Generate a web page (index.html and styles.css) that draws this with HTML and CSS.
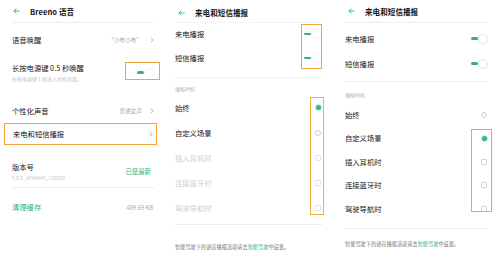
FILE: index.html
```html
<!DOCTYPE html>
<html lang="zh-CN">
<head>
<meta charset="utf-8">
<link rel="stylesheet" href="styles.css">
</head>
<body>
<div class="screens">

  <section class="screen s1">
    <header class="bar">
      <svg class="back" viewBox="0 0 10 8"><path d="M9 4H1.5M4.5 1L1.3 4l3.2 3" /></svg>
      <span class="title">Breeno 语音</span>
    </header>
    <div class="rule"></div>
    <div class="row r-wake">
      <span class="label">语音唤醒</span>
      <span class="value">“小布小布”<i class="chev"></i></span>
    </div>
    <div class="row r-power">
      <div class="text">
        <div class="label">长按电源键 0.5 秒唤醒</div>
        <div class="sub">长按电源键 1 秒进入关机页面。</div>
      </div>
      <span class="switch"><span class="track"></span><span class="knob"></span></span>
    </div>
    <div class="row r-voice">
      <span class="label">个性化声音</span>
      <span class="value">普通女声<i class="chev"></i></span>
    </div>
    <div class="row r-call boxed">
      <span class="label">来电和短信播报</span>
      <span class="value"><i class="chev"></i></span>
    </div>
    <div class="row r-version">
      <div class="text">
        <div class="label">版本号</div>
        <div class="sub">5.0.6_d744445_190929</div>
      </div>
      <span class="value green">已是最新</span>
    </div>
    <div class="rule"></div>
    <div class="row r-cache">
      <span class="label green">清理缓存</span>
      <span class="value">489.69 KB</span>
    </div>
    <div class="mark m1"></div>
  </section>

  <section class="screen s2">
    <header class="bar">
      <svg class="back" viewBox="0 0 10 8"><path d="M9 4H1.5M4.5 1L1.3 4l3.2 3" /></svg>
      <span class="title">来电和短信播报</span>
    </header>
    <div class="rule faint"></div>
    <div class="row tog"><span class="label">来电播报</span><span class="switch"><span class="track"></span><span class="knob"></span></span></div>
    <div class="row tog"><span class="label">短信播报</span><span class="switch"><span class="track"></span><span class="knob"></span></span></div>
    <div class="rule sec-rule"></div>
    <div class="caption">播报时机</div>
    <div class="row opt"><span class="label">始终</span><span class="radio on"></span></div>
    <div class="row opt"><span class="label">自定义场景</span><span class="radio"></span></div>
    <div class="row opt off"><span class="label">插入耳机时</span><span class="check"></span></div>
    <div class="row opt off"><span class="label">连接蓝牙时</span><span class="check"></span></div>
    <div class="row opt off"><span class="label">驾驶导航时</span><span class="check"></span></div>
    <div class="rule foot-rule"></div>
    <p class="foot">智能驾驶下的语音播报选项请去<span class="green">智能驾驶</span>中设置。</p>
    <div class="mark m2a"></div>
    <div class="mark m2b"></div>
  </section>

  <section class="screen s3">
    <header class="bar">
      <svg class="back" viewBox="0 0 10 8"><path d="M9 4H1.5M4.5 1L1.3 4l3.2 3" /></svg>
      <span class="title">来电和短信播报</span>
    </header>
    <div class="rule"></div>
    <div class="row tog"><span class="label">来电播报</span><span class="switch"><span class="track"></span><span class="knob"></span></span></div>
    <div class="row tog"><span class="label">短信播报</span><span class="switch"><span class="track"></span><span class="knob"></span></span></div>
    <div class="rule sec-rule"></div>
    <div class="caption">播报时机</div>
    <div class="row opt"><span class="label">始终</span><span class="radio"></span></div>
    <div class="row opt"><span class="label">自定义场景</span><span class="radio on"></span></div>
    <div class="row opt"><span class="label">插入耳机时</span><span class="check"></span></div>
    <div class="row opt"><span class="label">连接蓝牙时</span><span class="check"></span></div>
    <div class="row opt"><span class="label">驾驶导航时</span><span class="check"></span></div>
    <div class="rule foot-rule"></div>
    <p class="foot">智能驾驶下的语音播报选项请去<span class="green">智能驾驶</span>中设置。</p>
    <div class="mark m3"></div>
  </section>

</div>
</body>
</html>
```

FILE: styles.css
```css
* { box-sizing: border-box; }
html, body { margin: 0; padding: 0; background: #fff; }
body {
  font-family: "Noto Sans CJK SC", "Noto Sans", sans-serif;
  color: #151515;
  width: 500px;
  height: 266px;
  overflow: hidden;
}
.screens {
  display: grid;
  grid-template-columns: 165px 168px 167px;
  height: 266px;
}
.screen {
  position: relative;
  display: flex;
  flex-direction: column;
  padding: 0 11px 0 12px;
  background: #fff;
}
.s2 { padding: 0 11px 0 10px; }
.s3 { padding: 0 12px 0 12px; }

.bar {
  height: 22px;
  display: flex;
  align-items: center;
  gap: 10px;
  padding-left: 1px;
}
.s2 .bar { padding-top: 3px; padding-left: 3px; }
.s3 .bar { padding-left: 3px; }
.back { width: 7px; height: 6px; fill: none; stroke: #2eb47f; stroke-width: 1.3; stroke-linecap: round; stroke-linejoin: round; }
.title { font-size: 7.5px; font-weight: 700; letter-spacing: 0.1px; }

.rule { height: 1px; background: #ececec; flex: none; }
.rule.faint { background: #f4f4f4; }

.row {
  display: flex;
  align-items: center;
  justify-content: space-between;
  flex: none;
}
.label { font-size: 7.3px; line-height: 10px; white-space: nowrap; }
.sub { font-size: 5px; line-height: 7px; color: #c4c4c4; white-space: nowrap; margin-top: 2px; }
.value { display: flex; align-items: center; gap: 7px; font-size: 5.6px; color: #a8a8a8; white-space: nowrap; }
.green { color: #2eb47f; }
.value.green { font-size: 6.4px; margin-right: 3px; }
.chev {
  display: block;
  width: 4px; height: 4px;
  border-top: 1px solid #c8c8c8;
  border-right: 1px solid #c8c8c8;
  transform: rotate(45deg);
  margin-right: 1px;
}

/* screen 1 rows */
.r-wake { height: 34px; }
.r-power { height: 31px; }
.r-voice { height: 24px; margin-top: 11px; }
.r-call { height: 22px; }
.r-version { height: 31px; margin-top: 11px; }
.r-cache { height: 24px; margin-top: 7px; }
.r-cache .value { font-size: 5.8px; margin-right: 1px; }

/* switch */
.switch { position: relative; display: flex; align-items: center; width: 17px; height: 10px; }
.track { width: 7px; height: 2.5px; border-radius: 2px; background: #2eb47f; }
.knob { width: 10px; height: 10px; border-radius: 50%; background: #fff; border: 0.6px solid #f3f3f3; }
.s3 .knob { border-color: #e6e6e6; box-shadow: 0 0.5px 1px rgba(0,0,0,0.06); }

/* radio / check */
.radio { width: 6px; height: 6px; border-radius: 50%; border: 0.8px solid #cfcfcf; margin-right: 1px; }
.radio.on { width: 5.5px; height: 5.5px; border: none; background: #36b784; box-shadow: 0 0 0 1px #cdeee0; }
.check { width: 6px; height: 6px; border-radius: 1.3px; border: 0.8px solid #cfcfcf; margin-right: 1px; }

.opt.off .label { color: #cfcfcf; }
.opt.off .check { border-color: #e0e0e0; }

.caption { font-size: 5px; color: #b3b3b3; line-height: 7px; flex: none; }

/* screen 2 */
.s2 .tog { height: 24px; }
.s2 .rule.faint { margin-bottom: -1px; }
.s2 .sec-rule { margin-top: 7px; background: #f2f2f2; }
.s2 .caption { margin-top: 7px; }
.s2 .opt { height: 25px; }
.s2 .caption + .opt { margin-top: 3px; }
.s2 .foot-rule { margin-top: 4px; }
.s2 .tog .switch { margin-right: 1px; }

/* screen 3 */
.s3 .tog { height: 25px; }
.s3 .rule + .tog { margin-top: 3px; }
.s3 .sec-rule { margin-top: 5px; }
.s3 .caption { margin-top: 9px; }
.s3 .opt { height: 23.5px; }
.s3 .caption + .opt { margin-top: 5px; }
.s3 .foot-rule { margin-top: 7px; }

.foot { font-size: 5.2px; color: #777; margin: 0; line-height: 7px; white-space: nowrap; }
.s2 .foot { margin-top: 18px; }
.s3 .foot { margin-top: 11px; }

/* highlight marks (annotation overlays) */
.boxed { position: relative; }
.r-call.boxed { margin-left: -8px; margin-right: -3px; padding-left: 8px; padding-right: 3px; border: 1.5px solid #f2a63a; }
.mark { position: absolute; border: 1.5px solid #f2a63a; pointer-events: none; }
.m1 { left: 125px; top: 62px; width: 35px; height: 18px; }
.m2a { left: 136px; top: 24px; width: 21px; height: 45px; }
.m2b { left: 145px; top: 97px; width: 14px; height: 118px; border-color: #eab43c; }
.m3 { left: 138px; top: 129px; width: 21px; height: 83px; }
```
